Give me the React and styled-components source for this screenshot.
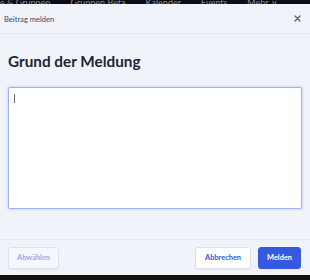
import React from "react";
import styled, { createGlobalStyle } from "styled-components";

const Global = createGlobalStyle`
  html, body { margin: 0; padding: 0; background: #121212; }
  body { font-family: Lato, "Noto Sans", sans-serif; width: 310px; height: 280px; overflow: hidden; }
`;

const Page = styled.div`
  display: flex;
  flex-direction: column;
  width: 310px;
  height: 280px;
`;

const TopStrip = styled.div`
  height: 4px;
  overflow: hidden;
  background: #0d0d12;
  display: flex;
  gap: 20px;
  align-items: flex-end;
`;

const NavText = styled.span`
  font-size: 9px;
  line-height: 9px;
  color: #8a8f9a;
  white-space: nowrap;
  margin-bottom: -3px;
`;

const Modal = styled.div`
  height: 271px;
  background: #f0f3f9;
  display: flex;
  flex-direction: column;
`;

const Header = styled.div`
  height: 29px;
  display: flex;
  align-items: center;
  justify-content: space-between;
  padding: 0 8px 0 4px;
  border-bottom: 1px solid #e2e6ee;
`;

const HeaderTitle = styled.span`
  font-size: 7.6px;
  color: #444a58;
`;

const Close = styled.button`
  border: none;
  background: none;
  padding: 0;
  width: 10px;
  height: 10px;
  display: flex;
  align-items: center;
  justify-content: center;
  color: #5b6272;
  cursor: pointer;
`;

const Body = styled.div`
  flex: 1;
  display: flex;
  flex-direction: column;
  padding: 0 8px;
  border-bottom: 1px solid #e3e7ef;
`;

const Title = styled.h2`
  margin: 18px 0 0;
  font-size: 15.3px;
  line-height: 19px;
  font-weight: 700;
  color: #1e2433;
`;

const TextArea = styled.div`
  margin-top: 16px;
  height: 122px;
  background: #fff;
  border: 1px solid #9fb1f5;
  border-radius: 2px;
  box-shadow: 0 0 0 1.5px #dce3fb;
  padding: 6px 5px;
  box-sizing: border-box;
`;

const Caret = styled.div`
  width: 1px;
  height: 9px;
  background: #666;
`;

const Footer = styled.div`
  height: 35px;
  display: flex;
  align-items: center;
  padding: 0 9px 0 8px;
  gap: 7px;
`;

const Button = styled.button`
  height: 22px;
  padding: 0 ${(p) => p.$px}px;
  border-radius: 3px;
  font-family: Lato, "Noto Sans", sans-serif;
  font-size: 7.4px;
  font-weight: 700;
  cursor: pointer;
  border: 1px solid ${(p) => (p.$primary ? "#3659e0" : "#dde1e9")};
  background: ${(p) => (p.$primary ? "#3659e0" : p.$disabled ? "#f5f7fb" : "#fff")};
  color: ${(p) => (p.$primary ? "#fff" : p.$disabled ? "#9aabee" : "#3554d6")};
  box-shadow: 0 1px 1px rgba(0, 0, 0, 0.06);
`;

const Spacer = styled.div`
  flex: 1;
`;

export default function App() {
  return (
    <>
      <Global />
      <Page>
        <TopStrip>
          <NavText>e &amp; Gruppen</NavText>
          <NavText>Gruppen Beta</NavText>
          <NavText>Kalender</NavText>
          <NavText>Events</NavText>
          <NavText>Mehr ∨</NavText>
        </TopStrip>
        <Modal>
          <Header>
            <HeaderTitle>Beitrag melden</HeaderTitle>
            <Close aria-label="Schließen">
              <svg width="7" height="7" viewBox="0 0 7 7">
                <path d="M1 1L6 6M6 1L1 6" stroke="currentColor" strokeWidth="1.3" strokeLinecap="round" />
              </svg>
            </Close>
          </Header>
          <Body>
            <Title>Grund der Meldung</Title>
            <TextArea>
              <Caret />
            </TextArea>
          </Body>
          <Footer>
            <Button $disabled $px={8}>Abwählen</Button>
            <Spacer />
            <Button $px={9}>Abbrechen</Button>
            <Button $primary $px={8}>Melden</Button>
          </Footer>
        </Modal>
      </Page>
    </>
  );
}
